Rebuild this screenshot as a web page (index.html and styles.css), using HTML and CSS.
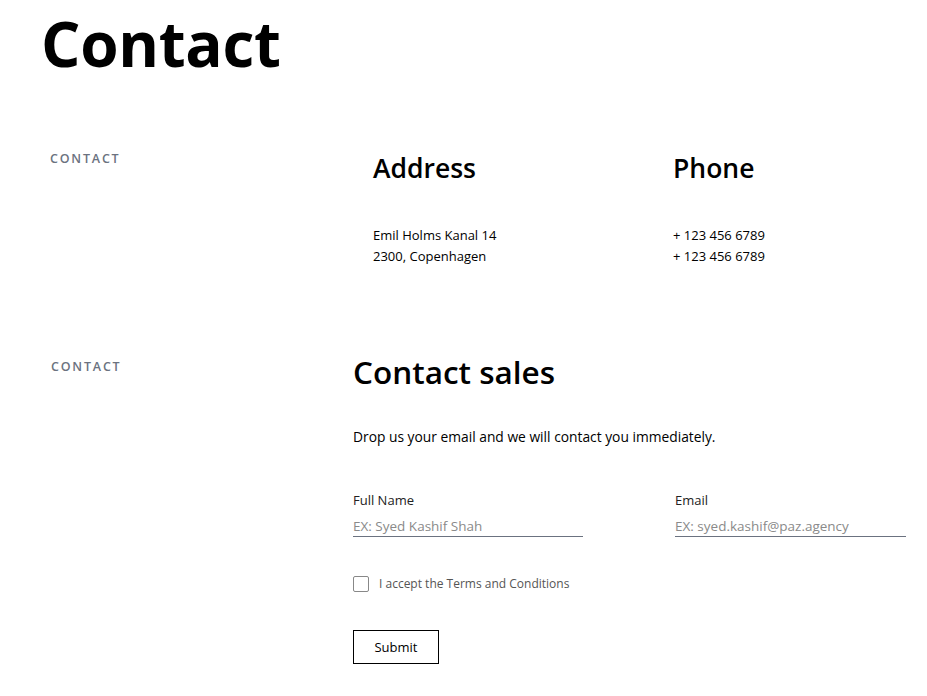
FILE: index.html
```html
<!DOCTYPE html>
<html lang="en">
<head>
<meta charset="utf-8">
<title>Contact</title>
<link rel="stylesheet" href="styles.css">
</head>
<body>
<h1 class="page-title">Contact</h1>

<section class="info">
  <div class="eyebrow">Contact</div>
  <div class="info-col">
    <h2 class="info-title">Address</h2>
    <p class="info-text">Emil Holms Kanal 14<br>2300, Copenhagen</p>
  </div>
  <div class="info-col">
    <h2 class="info-title">Phone</h2>
    <p class="info-text">+ 123 456 6789<br>+ 123 456 6789</p>
  </div>
</section>

<section class="sales">
  <div class="eyebrow">Contact</div>
  <form class="sales-form">
    <h2 class="sales-title">Contact sales</h2>
    <p class="sales-lead">Drop us your email and we will contact you immediately.</p>
    <div class="fields">
      <label class="field">
        <span class="field-label">Full Name</span>
        <input class="field-input" type="text" placeholder="EX: Syed Kashif Shah">
      </label>
      <label class="field">
        <span class="field-label">Email</span>
        <input class="field-input" type="email" placeholder="EX: syed.kashif@paz.agency">
      </label>
    </div>
    <label class="terms">
      <span class="checkbox"></span>
      <span class="terms-text">I accept the Terms and Conditions</span>
    </label>
    <button class="submit" type="button">Submit</button>
  </form>
</section>
</body>
</html>
```

FILE: styles.css
```css
* { box-sizing: border-box; }
html, body { margin: 0; padding: 0; background: #fff; }
body {
  font-family: "Open Sans", "DejaVu Sans", sans-serif;
  color: #000;
}
.page-title {
  margin: 0;
  padding: 8px 0 0 41px;
  font-size: 62px;
  font-weight: 700;
  line-height: 70px;
  letter-spacing: -0.3px;
}
.info {
  display: grid;
  grid-template-columns: 323px 300px 1fr;
  padding-left: 50px;
  margin-top: 73px;
}
.eyebrow {
  font-size: 12.5px;
  font-weight: 600;
  letter-spacing: 1.8px;
  text-transform: uppercase;
  color: #6b7280;
  line-height: 16px;
}
.info-title {
  margin: -1px 0 0;
  font-size: 26.5px;
  font-weight: 600;
  line-height: 36px;
}
.info-text {
  margin: 39px 0 0;
  font-size: 13px;
  line-height: 21px;
}
.sales {
  display: grid;
  grid-template-columns: 302px 1fr;
  padding-left: 51px;
  margin-top: 92px;
}
.sales-form { padding-right: 21px; }
.sales-title {
  margin: -6px 0 0;
  font-size: 31.5px;
  font-weight: 600;
  line-height: 38px;
}
.sales-lead {
  margin: 36px 0 0;
  font-size: 13.8px;
  line-height: 20px;
}
.fields {
  display: grid;
  grid-template-columns: 230px 231px;
  justify-content: space-between;
  margin-top: 43px;
}
.field { display: flex; flex-direction: column; }
.field-label {
  font-size: 13px;
  font-weight: 500;
  color: #222;
  line-height: 20px;
}
.field-input {
  margin-top: 7px;
  border: 0;
  border-bottom: 1px solid #6b7280;
  padding: 0 0 1px;
  font: inherit;
  font-size: 13.5px;
  line-height: 18px;
  outline: none;
  background: transparent;
}
.field-input::placeholder { color: #8a8a8a; }
.terms {
  display: flex;
  align-items: center;
  gap: 10px;
  margin-top: 38px;
}
.checkbox {
  width: 16px;
  height: 16px;
  border: 1px solid #888;
  border-radius: 2px;
}
.terms-text {
  font-size: 12px;
  color: #555;
}
.submit {
  display: block;
  margin-top: 38px;
  width: 86px;
  height: 34px;
  border: 1px solid #000;
  background: #fff;
  font: inherit;
  font-size: 13px;
  color: #000;
  padding: 0;
}
```
